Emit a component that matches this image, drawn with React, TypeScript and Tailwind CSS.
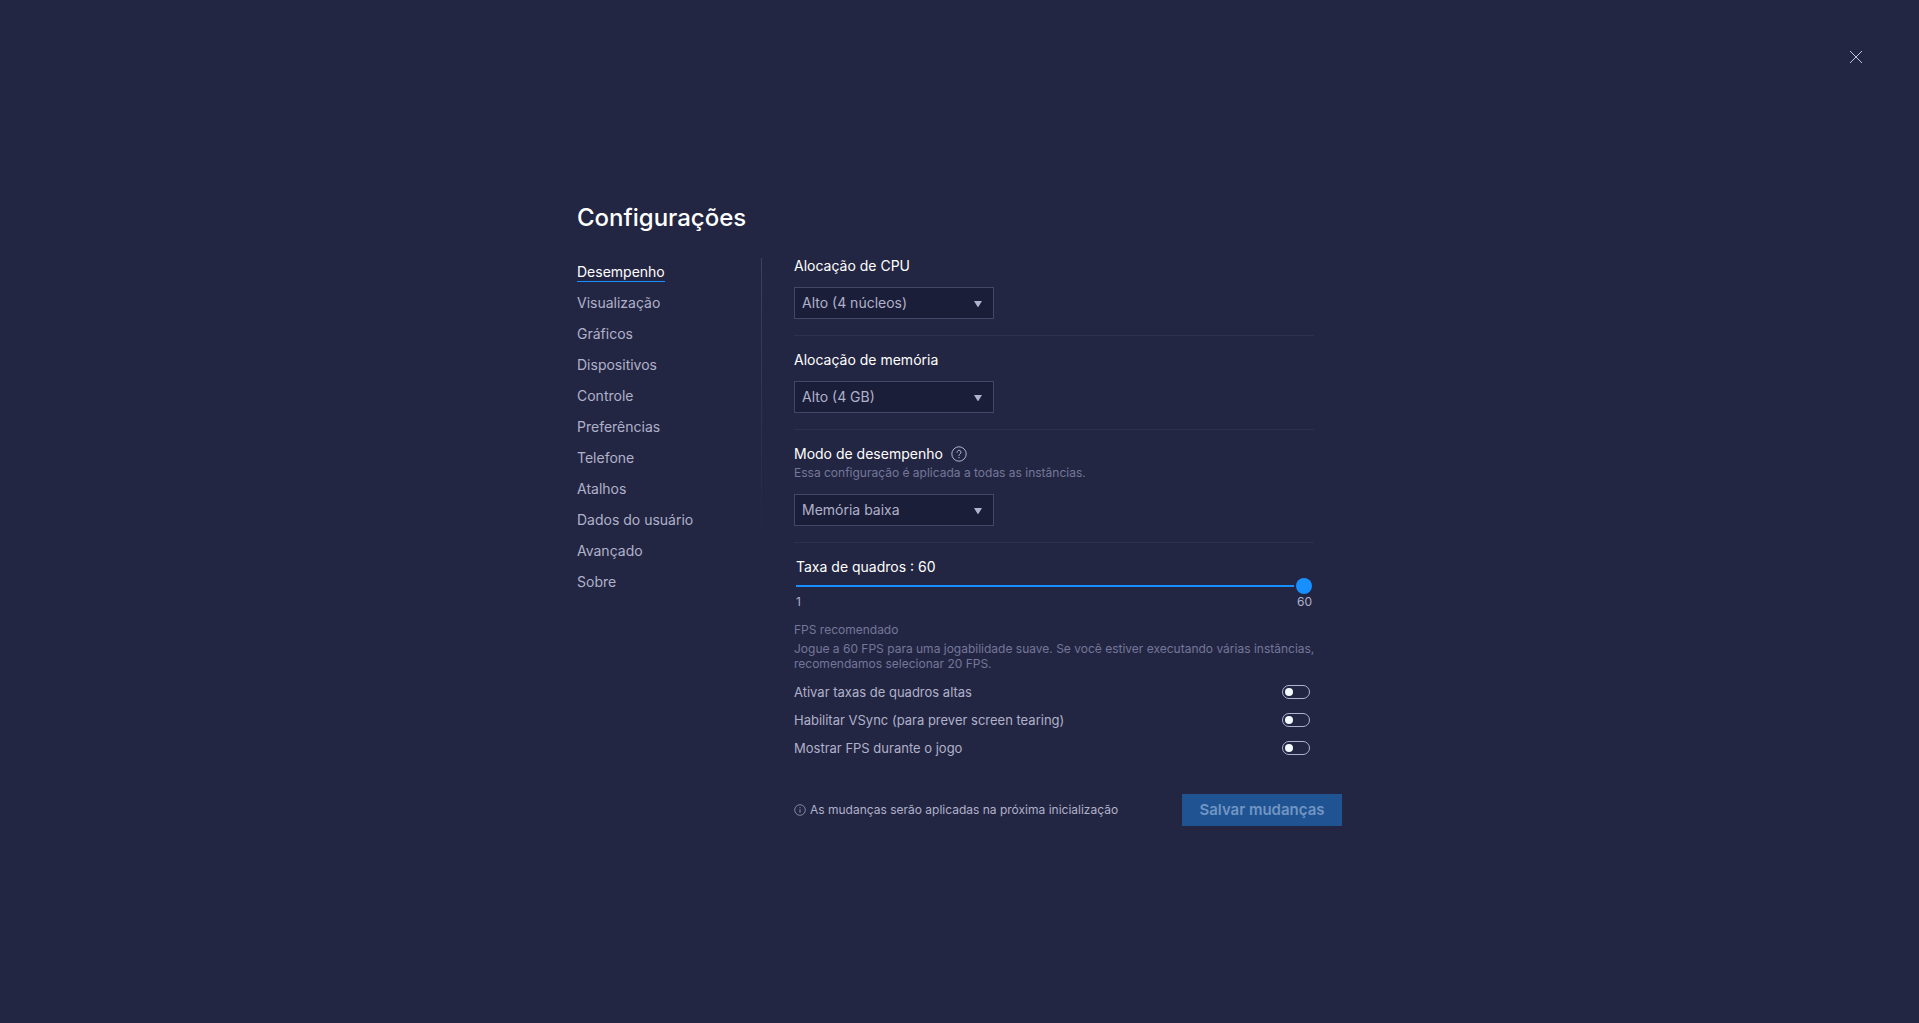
import { useState } from "react";
import type { ReactNode } from "react";

const menu = [
  "Desempenho",
  "Visualização",
  "Gráficos",
  "Dispositivos",
  "Controle",
  "Preferências",
  "Telefone",
  "Atalhos",
  "Dados do usuário",
  "Avançado",
  "Sobre",
];

const toggles = [
  { id: "high-fps", label: "Ativar taxas de quadros altas" },
  { id: "vsync", label: "Habilitar VSync (para prever screen tearing)" },
  { id: "show-fps", label: "Mostrar FPS durante o jogo" },
];

type SelectFieldProps = {
  id: string;
  label: string;
  options: string[];
  help?: ReactNode;
  hint?: string;
};

function SelectField({ id, label, options, help, hint }: SelectFieldProps) {
  return (
    <div className="mb-4 border-b border-[#2d3050] pb-4">
      <div className="flex items-center gap-2">
        <label htmlFor={id} className="text-sm leading-4 text-white">
          {label}
        </label>
        {help}
      </div>
      {hint && (
        <p className="mt-[3px] text-xs leading-4 text-[#74779a]">{hint}</p>
      )}
      <div className="relative mt-[13px] w-[200px]">
        <select
          id={id}
          className="block h-8 w-full appearance-none border border-[#434665] bg-[#1b1e38] pr-8 pl-[7px] text-sm text-[#b0b1ca] outline-none"
        >
          {options.map((option) => (
            <option key={option}>{option}</option>
          ))}
        </select>
        <svg
          viewBox="0 0 8 6"
          className="pointer-events-none absolute top-3.5 right-3 h-1.5 w-2 fill-[#b0b2cf]"
        >
          <path d="M0 0h8L4.6 5.6a.7.7 0 0 1-1.2 0z" />
        </svg>
      </div>
    </div>
  );
}

function HelpButton() {
  return (
    <button type="button" aria-label="Ajuda" className="-my-1">
      <svg
        viewBox="0 0 16 16"
        className="block h-4 w-4 fill-none stroke-[#b0b2cf]"
      >
        <circle cx="8" cy="8" r="7.2" />
        <path
          d="M6 6.3a2 2 0 1 1 3.1 1.6C8.4 8.4 8 8.7 8 9.6"
          strokeLinecap="round"
        />
        <circle cx="8" cy="11.6" r=".3" />
      </svg>
    </button>
  );
}

export default function App() {
  const [fps, setFps] = useState(60);

  return (
    <div className="relative flex min-h-screen items-center justify-center bg-[#232642] px-6 font-['Inter',sans-serif] text-[#b0b1ca]">
      <button
        type="button"
        aria-label="Fechar"
        className="absolute top-[51px] right-[57px]"
      >
        <svg
          viewBox="0 0 12 12"
          className="block h-3 w-3 fill-none stroke-[#c3c5e0]"
        >
          <path d="M0 0l12 12M12 0L0 12" />
        </svg>
      </button>

      <main className="w-full max-w-[765px] pt-[5px]">
        <h1 className="mb-6 text-2xl leading-8 font-medium text-white">
          Configurações
        </h1>

        <div className="flex items-start">
          <nav className="w-[184px] shrink-0 pt-1">
            <ul className="flex flex-col gap-[11px]">
              {menu.map((item, i) => (
                <li key={item} className="flex">
                  <a
                    href="#"
                    className={
                      i === 0
                        ? "border-b border-[#188fff] text-sm leading-[19px] text-white"
                        : "border-b border-transparent text-sm leading-[19px] hover:text-white"
                    }
                  >
                    {item}
                  </a>
                </li>
              ))}
            </ul>
          </nav>

          <div className="h-72 w-px shrink-0 bg-linear-to-b from-[#3d4060] to-[#232642]" />

          <form className="ml-8 min-w-0 grow">
            <div className="mr-7">
              <SelectField
                id="cpu"
                label="Alocação de CPU"
                options={["Alto (4 núcleos)", "Médio (2 núcleos)", "Baixo (1 núcleo)"]}
              />
              <SelectField
                id="memory"
                label="Alocação de memória"
                options={["Alto (4 GB)", "Médio (2 GB)", "Baixo (1 GB)"]}
              />
              <SelectField
                id="mode"
                label="Modo de desempenho"
                hint="Essa configuração é aplicada a todas as instâncias."
                options={["Memória baixa", "Balanceado", "Alto desempenho"]}
                help={<HelpButton />}
              />

              <div className="mx-0.5">
                <label htmlFor="fps" className="block text-sm leading-4 text-white">
                  Taxa de quadros : {fps}
                </label>
                <input
                  id="fps"
                  type="range"
                  min={1}
                  max={60}
                  value={fps}
                  onChange={(e) => setFps(Number(e.target.value))}
                  style={{ backgroundSize: `${((fps - 1) / 59) * 100}% 2px` }}
                  className="mt-[3px] block h-4 w-full appearance-none bg-[linear-gradient(#188fff,#188fff)] bg-left bg-no-repeat outline-none [&::-webkit-slider-thumb]:h-4 [&::-webkit-slider-thumb]:w-4 [&::-webkit-slider-thumb]:appearance-none [&::-webkit-slider-thumb]:rounded-full [&::-webkit-slider-thumb]:bg-[#188fff] [&::-webkit-slider-thumb]:shadow-[0_0_0_2px_#232642]"
                />
                <div className="flex justify-between text-xs leading-4">
                  <span>1</span>
                  <span>60</span>
                </div>
              </div>

              <p className="mt-3 text-xs leading-4 text-[#74779a]">
                FPS recomendado
              </p>
              <p className="mt-[3px] -mr-3 text-xs leading-[15px] text-[#74779a]">
                Jogue a 60 FPS para uma jogabilidade suave. Se você estiver
                executando várias instâncias, recomendamos selecionar 20 FPS.
              </p>

              <div className="mt-[13px] mr-1 flex flex-col gap-3">
                {toggles.map(({ id, label }) => (
                  <div key={id} className="flex items-center justify-between">
                    <label htmlFor={id} className="text-[13px] leading-4">
                      {label}
                    </label>
                    <input
                      id={id}
                      type="checkbox"
                      role="switch"
                      className="flex h-3.5 w-7 appearance-none items-center rounded-full border border-[#b0b2cf] px-0.5 before:h-2 before:w-2 before:rounded-full before:bg-[#f5faff] checked:justify-end checked:bg-[#188fff]"
                    />
                  </div>
                ))}
              </div>
            </div>

            <div className="mt-[38px] flex items-center justify-between">
              <p className="flex items-center gap-1 text-xs leading-4">
                <svg
                  viewBox="0 0 12 12"
                  className="h-3 w-3 fill-none stroke-[#9a9cba]"
                >
                  <circle cx="6" cy="6" r="5.3" strokeWidth=".8" />
                  <path d="M6 5.2v3.5M6 3.2v1" strokeWidth=".9" />
                </svg>
                As mudanças serão aplicadas na próxima inicialização
              </p>
              <button
                type="button"
                disabled
                className="h-8 w-40 bg-[#1f5391] text-[15px] font-semibold text-[#7295c4]"
              >
                Salvar mudanças
              </button>
            </div>
          </form>
        </div>
      </main>
    </div>
  );
}
